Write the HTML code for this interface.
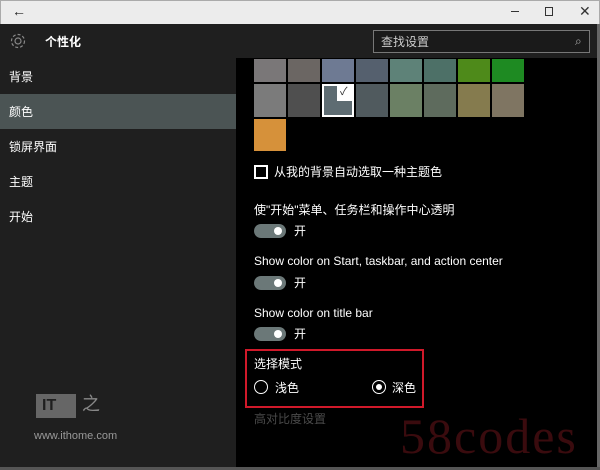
<!DOCTYPE html>
<html><head><meta charset="utf-8"><style>
*{margin:0;padding:0;box-sizing:border-box}
body{width:600px;height:470px;overflow:hidden;background:#000;position:relative;font-family:"Liberation Sans","Noto Sans CJK SC",sans-serif;color:#fff}
.a{position:absolute}
.t{font-size:12px;line-height:14px;white-space:nowrap}
.sw{position:absolute;width:32px;height:23px}
.tg{position:absolute;width:32px;height:14px;border-radius:7px;background:#6b7878}
.tg:after{content:"";position:absolute;right:4px;top:3px;width:8px;height:8px;border-radius:50%;background:#fff}
</style></head><body>
<div class="a" style="left:0;top:0;width:600px;height:24px;background:#ececec;border:1px solid #aaa;border-bottom:none"></div>
<div class="a t" style="left:12px;top:4px;color:#222;font-size:14px">←</div>
<div class="a" style="left:511px;top:11px;width:8px;height:1px;background:#333"></div>
<div class="a" style="left:545px;top:7px;width:8px;height:9px;border:1px solid #333"></div>
<div class="a t" style="left:579px;top:4px;color:#333;font-size:14px">✕</div>
<div class="a" style="left:0;top:24px;width:600px;height:34px;background:#1f1f1f"></div>
<div class="a" style="left:0;top:58px;width:236px;height:412px;background:#1f1f1f"></div>
<svg class="a" style="left:9px;top:32px" width="18" height="18" viewBox="0 0 18 18"><circle cx="9" cy="9" r="3" fill="none" stroke="#888" stroke-width="1.2"/><circle cx="9" cy="9" r="6.5" fill="none" stroke="#888" stroke-width="1.2" stroke-dasharray="3 2"/></svg>
<div class="a t" style="left:45px;top:35px;font-weight:bold">个性化</div>
<div class="a" style="left:373px;top:30px;width:217px;height:23px;border:1px solid #777;background:#1a1a1a"></div>
<div class="a t" style="left:381px;top:35px;color:#ccc">查找设置</div>
<div class="a t" style="left:575px;top:34px;color:#aaa">⌕</div>
<div class="a" style="left:0;top:94px;width:236px;height:35px;background:#4b5454"></div>
<div class="a t" style="left:9px;top:70px">背景</div>
<div class="a t" style="left:9px;top:105px">颜色</div>
<div class="a t" style="left:9px;top:140px">锁屏界面</div>
<div class="a t" style="left:9px;top:175px">主题</div>
<div class="a t" style="left:9px;top:210px">开始</div>
<div class="sw" style="left:254px;top:59px;background:#7a7778"></div>
<div class="sw" style="left:288px;top:59px;background:#6b6663"></div>
<div class="sw" style="left:322px;top:59px;background:#6e7a93"></div>
<div class="sw" style="left:356px;top:59px;background:#55606e"></div>
<div class="sw" style="left:390px;top:59px;background:#5e8278"></div>
<div class="sw" style="left:424px;top:59px;background:#4d7067"></div>
<div class="sw" style="left:458px;top:59px;background:#4e8a1a"></div>
<div class="sw" style="left:492px;top:59px;background:#1e8a22"></div>
<div class="sw" style="left:254px;top:84px;height:33px;background:#7b7b7b"></div>
<div class="sw" style="left:288px;top:84px;height:33px;background:#4f4f4f"></div>
<div class="sw" style="left:322px;top:84px;height:33px;background:#5e6c72;border:2px solid #fff"></div>
<div class="a" style="left:337px;top:84px;width:17px;height:17px;background:#fff"></div>
<div class="a t" style="left:340px;top:85px;color:#333;font-size:11px">✓</div>
<div class="sw" style="left:356px;top:84px;height:33px;background:#505a5e"></div>
<div class="sw" style="left:390px;top:84px;height:33px;background:#6b8064"></div>
<div class="sw" style="left:424px;top:84px;height:33px;background:#5e6b5d"></div>
<div class="sw" style="left:458px;top:84px;height:33px;background:#857b4e"></div>
<div class="sw" style="left:492px;top:84px;height:33px;background:#7f7562"></div>
<div class="sw" style="left:254px;top:119px;height:32px;background:#d6913a"></div>
<div class="a" style="left:254px;top:165px;width:14px;height:14px;border:2px solid #fff"></div>
<div class="a t" style="left:274px;top:165px">从我的背景自动选取一种主题色</div>
<div class="a t" style="left:254px;top:203px">使"开始"菜单、任务栏和操作中心透明</div>
<div class="tg" style="left:254px;top:224px"></div><div class="a t" style="left:294px;top:224px">开</div>
<div class="a t" style="left:254px;top:254px">Show color on Start, taskbar, and action center</div>
<div class="tg" style="left:254px;top:276px"></div><div class="a t" style="left:294px;top:276px">开</div>
<div class="a t" style="left:254px;top:306px">Show color on title bar</div>
<div class="tg" style="left:254px;top:327px"></div><div class="a t" style="left:294px;top:327px">开</div>
<div class="a" style="left:245px;top:349px;width:179px;height:59px;border:2px solid #d0192a"></div>
<div class="a t" style="left:254px;top:357px">选择模式</div>
<div class="a" style="left:254px;top:380px;width:14px;height:14px;border:1.5px solid #fff;border-radius:50%"></div>
<div class="a t" style="left:275px;top:381px">浅色</div>
<div class="a" style="left:372px;top:380px;width:14px;height:14px;border:1.5px solid #fff;border-radius:50%"></div>
<div class="a" style="left:376px;top:384px;width:6px;height:6px;background:#fff;border-radius:50%"></div>
<div class="a t" style="left:392px;top:381px">深色</div>
<div class="a t" style="left:254px;top:412px;color:#4a4a4a">高对比度设置</div>
<div class="a" style="left:400px;top:408px;font-family:'Liberation Serif',serif;font-size:50px;letter-spacing:2px;color:#3a0b0e;line-height:56px">58codes</div>
<div class="a" style="left:36px;top:394px;width:40px;height:24px;background:#666"></div>
<div class="a t" style="left:42px;top:399px;color:#1f1f1f;font-weight:bold;font-size:16px">IT</div>
<div class="a t" style="left:82px;top:397px;color:#888;font-size:18px">之</div>
<div class="a t" style="left:34px;top:429px;color:#999;font-size:11px">www.ithome.com</div>
<div class="a" style="left:597px;top:24px;width:3px;height:446px;background:#666"></div>
<div class="a" style="left:0;top:467px;width:600px;height:3px;background:#555"></div>
</body></html>
